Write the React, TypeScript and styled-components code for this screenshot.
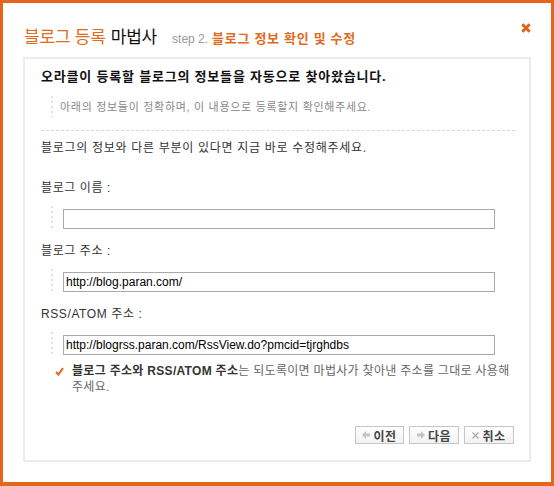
import styled, { createGlobalStyle } from "styled-components";

const ORANGE = "#e4661c";

const GlobalStyle = createGlobalStyle`
  html, body {
    margin: 0;
    padding: 0;
    background: #fff;
  }
  body {
    font-family: "Liberation Sans", "Noto Sans CJK KR", sans-serif;
  }
`;

const Frame = styled.div`
  box-sizing: border-box;
  width: 554px;
  height: 486px;
  border: 3px solid ${ORANGE};
  border-bottom-width: 4px;
  padding: 0 20px 20px 20px;
  display: flex;
  flex-direction: column;
  background: #fff;
`;

const Header = styled.header`
  box-sizing: border-box;
  height: 54px;
  padding-top: 10px;
  display: flex;
  align-items: center;
`;

const Title = styled.h1`
  margin: 0 0 0 1px;
  display: flex;
  align-items: baseline;
  font-weight: normal;
  font-size: 17px;
  letter-spacing: -0.2px;
  color: #111;
`;

const TitleAccent = styled.span`
  color: #df6a22;
  margin-right: 5px;
`;

const StepLabel = styled.span`
  margin-left: 15px;
  font-size: 12px;
  letter-spacing: 0;
  color: #999;
`;

const StepName = styled.span`
  margin-left: 4px;
  font-size: 13px;
  font-weight: bold;
  letter-spacing: 0.7px;
  color: #df6a22;
`;

const CloseButton = styled.button`
  margin-left: auto;
  align-self: flex-start;
  margin-top: 10px;
  padding: 0;
  border: 0;
  background: none;
  width: 10px;
  height: 10px;
  display: flex;
`;

const Panel = styled.section`
  flex: 1;
  border: 2px solid #ececec;
  padding: 10px 14px 16px 16px;
  display: flex;
  flex-direction: column;
`;

const Heading = styled.h2`
  margin: 0;
  font-size: 13px;
  line-height: 16px;
  font-weight: bold;
  letter-spacing: 0.8px;
  color: #111;
`;

const Marker = styled.span<{ $h: number }>`
  width: 2px;
  height: ${(p) => p.$h}px;
  flex-shrink: 0;
  background: repeating-linear-gradient(
    to bottom,
    #e0e0e0 0 2px,
    transparent 2px 5px
  );
`;

const NoteRow = styled.div`
  margin: 11px 0 0 10px;
  display: flex;
  align-items: center;
`;

const NoteText = styled.p`
  margin: 0 0 0 7px;
  font-size: 11px;
  line-height: 16px;
  letter-spacing: 0.7px;
  color: #888;
`;

const Divider = styled.hr`
  margin: 13px 0 0 0;
  border: 0;
  border-top: 1px dashed #d6d6d6;
  height: 0;
`;

const Intro = styled.p`
  margin: 9px 0 0 0;
  font-size: 12px;
  line-height: 16px;
  letter-spacing: 0.7px;
  color: #333;
`;

const Label = styled.label<{ $first?: boolean }>`
  display: block;
  margin-top: ${(p) => (p.$first ? 24 : 14)}px;
  font-size: 12px;
  line-height: 16px;
  letter-spacing: 0.6px;
  color: #333;
`;

const FieldRow = styled.div`
  margin: 10px 0 0 10px;
  display: flex;
  align-items: flex-end;
`;

const TextInput = styled.input`
  box-sizing: border-box;
  margin: 0 0 0 10px;
  width: 432px;
  height: 20px;
  padding: 0 2px;
  border: 1px solid #a9a9a9;
  font-family: "Liberation Sans", Arial, sans-serif;
  font-size: 12px;
  color: #000;
  outline: none;
`;

const CheckNote = styled.div`
  margin: 8px 0 0 14px;
  display: flex;
  align-items: flex-start;
`;

const CheckMark = styled.svg`
  flex-shrink: 0;
  margin-top: 4px;
`;

const CheckText = styled.p`
  margin: 0 0 0 8px;
  font-size: 12px;
  line-height: 16px;
  letter-spacing: 0.3px;
  color: #666;

  strong {
    color: #333;
  }
`;

const ButtonBar = styled.div`
  margin-top: auto;
  display: flex;
  justify-content: flex-end;
  gap: 5px;
  padding-right: 1px;
`;

const WizardButton = styled.button<{ $w: number }>`
  box-sizing: border-box;
  width: ${(p) => p.$w}px;
  height: 18px;
  padding: 0;
  border: 1px solid #c6c6c6;
  background: linear-gradient(#ffffff, #f2f2f2);
  display: inline-flex;
  align-items: center;
  justify-content: center;
  gap: 3px;
  font-family: "Noto Sans CJK KR", sans-serif;
  font-size: 12px;
  font-weight: bold;
  color: #444;
  letter-spacing: 0.5px;
`;

const ArrowIcon = ({ dir }: { dir: "left" | "right" }) => (
  <svg width="8" height="8" viewBox="0 0 8 8">
    <path
      d={
        dir === "left"
          ? "M0 4 L4 0 L4 2.5 L8 2.5 L8 5.5 L4 5.5 L4 8 Z"
          : "M8 4 L4 0 L4 2.5 L0 2.5 L0 5.5 L4 5.5 L4 8 Z"
      }
      fill="#c4c4c4"
    />
  </svg>
);

const CrossIcon = () => (
  <svg width="7" height="7" viewBox="0 0 7 7">
    <path d="M0.5 0.5 L6.5 6.5 M6.5 0.5 L0.5 6.5" stroke="#aaa" strokeWidth="1.2" />
  </svg>
);

const fields = [
  { label: "블로그 이름 :", value: "" },
  { label: "블로그 주소 :", value: "http://blog.paran.com/" },
  {
    label: "RSS/ATOM 주소 :",
    value: "http://blogrss.paran.com/RssView.do?pmcid=tjrghdbs",
  },
];

export default function App() {
  return (
    <>
      <GlobalStyle />
      <Frame>
        <Header>
          <Title>
            <TitleAccent>블로그 등록</TitleAccent>마법사
            <StepLabel>step 2.</StepLabel>
            <StepName>블로그 정보 확인 및 수정</StepName>
          </Title>
          <CloseButton aria-label="닫기">
            <svg width="10" height="10" viewBox="0 0 10 10">
              <path d="M1.3 1.3 L8.7 8.7 M8.7 1.3 L1.3 8.7" stroke="#e0621a" strokeWidth="3" />
            </svg>
          </CloseButton>
        </Header>

        <Panel>
          <Heading>오라클이 등록할 블로그의 정보들을 자동으로 찾아왔습니다.</Heading>
          <NoteRow>
            <Marker $h={21} />
            <NoteText>아래의 정보들이 정확하며, 이 내용으로 등록할지 확인해주세요.</NoteText>
          </NoteRow>
          <Divider />
          <Intro>블로그의 정보와 다른 부분이 있다면 지금 바로 수정해주세요.</Intro>

          {fields.map((f, i) => (
            <div key={f.label}>
              <Label $first={i === 0}>{f.label}</Label>
              <FieldRow>
                <Marker $h={23} />
                <TextInput readOnly defaultValue={f.value} />
              </FieldRow>
            </div>
          ))}

          <CheckNote>
            <CheckMark width="9" height="9" viewBox="0 0 9 9">
              <path d="M1 4.8 L3.4 7.6 L8 1" stroke={ORANGE} strokeWidth="2" fill="none" />
            </CheckMark>
            <CheckText>
              <strong>블로그 주소와 RSS/ATOM 주소</strong>는 되도록이면 마법사가 찾아낸 주소를 그대로 사용해
              <br />
              주세요.
            </CheckText>
          </CheckNote>

          <ButtonBar>
            <WizardButton $w={49}>
              <ArrowIcon dir="left" />
              이전
            </WizardButton>
            <WizardButton $w={50}>
              <ArrowIcon dir="right" />
              다음
            </WizardButton>
            <WizardButton $w={50}>
              <CrossIcon />
              취소
            </WizardButton>
          </ButtonBar>
        </Panel>
      </Frame>
    </>
  );
}
